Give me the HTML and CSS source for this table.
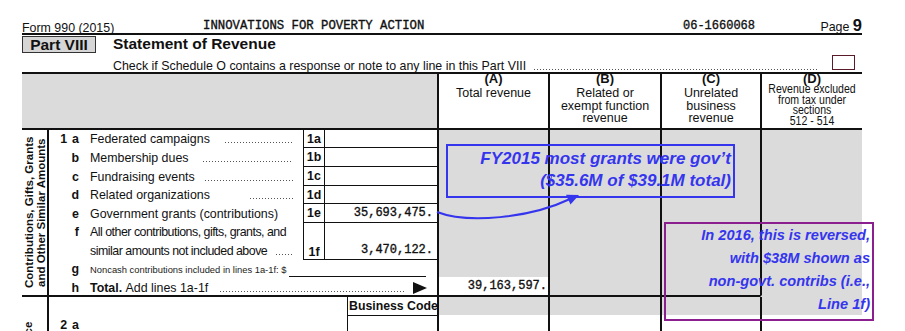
FILE: index.html
```
<!DOCTYPE html>
<html>
<head>
<meta charset="utf-8">
<link rel="stylesheet" href="styles.css">
</head>
<body>
<div class="sheet">
  <div class="form">
    <div class="top">
      <span class="form-no">Form 990 (2015)</span>
      <span class="org">INNOVATIONS FOR POVERTY ACTION</span>
      <span class="ein">06-1660068</span>
      <span class="page-no">Page <b>9</b></span>
    </div>
    <div class="part-row">
      <div class="part-tag">Part VIII</div>
      <div class="part-title">Statement of Revenue</div>
    </div>
    <div class="check-row">
      <span class="check-text">Check if Schedule O contains a response or note to any line in this Part VIII</span>
      <span class="dots lead-check"></span>
      <span class="checkbox"></span>
    </div>

    <div class="band band-head">
      <div class="head-blank"></div>
      <div class="col col-head">
        <div class="col-letter">(A)</div>
        <div class="col-text">Total revenue</div>
      </div>
      <div class="col col-head">
        <div class="col-letter">(B)</div>
        <div class="col-text">Related or<br>exempt function<br>revenue</div>
      </div>
      <div class="col col-head">
        <div class="col-letter">(C)</div>
        <div class="col-text">Unrelated<br>business<br>revenue</div>
      </div>
      <div class="col col-head">
        <div class="col-letter">(D)</div>
        <div class="col-text narrow">
          <span>Revenue excluded</span>
          <span>from tax under</span>
          <span>sections</span>
          <span>512 - 514</span>
        </div>
      </div>
    </div>

    <div class="band band-contrib">
      <div class="desc">
        <div class="side">
          <div class="side-text">Contributions, Gifts, Grants<br>and Other Similar Amounts</div>
        </div>
        <div class="rows">
          <div class="row r18">
            <span class="lbl"><span class="num">1</span>a</span>
            <span class="txt">Federated campaigns<span class="dots gap15"></span></span>
            <span class="box">1a</span>
            <span class="val"></span>
          </div>
          <div class="row r19">
            <span class="lbl">b</span>
            <span class="txt">Membership dues<span class="dots gap15"></span></span>
            <span class="box">1b</span>
            <span class="val"></span>
          </div>
          <div class="row r19">
            <span class="lbl">c</span>
            <span class="txt">Fundraising events<span class="dots gap10"></span></span>
            <span class="box">1c</span>
            <span class="val"></span>
          </div>
          <div class="row r18">
            <span class="lbl">d</span>
            <span class="txt">Related organizations<span class="dots gap40"></span></span>
            <span class="box">1d</span>
            <span class="val"></span>
          </div>
          <div class="row r19">
            <span class="lbl">e</span>
            <span class="txt">Government grants (contributions)</span>
            <span class="box">1e</span>
            <span class="val">35,693,475.</span>
          </div>
          <div class="row r37">
            <span class="lbl lbl-top">f</span>
            <span class="txt-multi">
              <span class="line">All other contributions, gifts, grants, and</span>
              <span class="line">similar amounts not included above<span class="dots gap9"></span></span>
            </span>
            <span class="box box-low">1f</span>
            <span class="val val-low">3,470,122.</span>
          </div>
          <div class="row r18 row-g">
            <span class="lbl">g</span>
            <span class="wide">
              <span class="small">Noncash contributions included in lines 1a-1f: $</span>
              <span class="blank"></span>
            </span>
          </div>
          <div class="row r17 row-h">
            <span class="lbl">h</span>
            <span class="wide total-line">
              <b>Total.</b>&nbsp;Add lines 1a-1f<span class="dots gap12"></span><span class="tri"></span>
            </span>
          </div>
        </div>
      </div>
      <div class="col col-a">
        <div class="fill"></div>
        <div class="total">39,163,597.</div>
      </div>
      <div class="col grey ruled"></div>
      <div class="col grey ruled"></div>
      <div class="col grey unruled"></div>
    </div>

    <div class="band band-prog">
      <div class="desc">
        <div class="side side-clip">
          <div class="side-text2">Program Service<br>Revenue</div>
        </div>
        <div class="prog-rows">
          <span class="lbl lbl2"><span class="num">2</span>a</span>
          <span></span>
          <div class="bc"><div class="bc-head">Business Code</div></div>
        </div>
      </div>
      <div class="col"><div class="cap"></div></div>
      <div class="col"><div class="cap"></div></div>
      <div class="col"><div class="cap"></div></div>
      <div class="col"><div class="cap"></div></div>
    </div>
  </div>

  <svg class="arrow" width="905" height="331" viewBox="0 0 905 331">
    <path d="M437 212 C 468 224, 530 218, 570 199" fill="none" stroke="#3535ee" stroke-width="2"/>
    <polygon points="579,195 570.5,204.5 566,194.8" fill="#3535ee"/>
  </svg>
  <div class="note note-blue">FY2015 most grants were gov’t<br>($35.6M of $39.1M total)</div>
  <div class="note note-purple">In 2016, this is reversed,<br>with $38M shown as<br>non-govt. contribs (i.e.,<br>Line 1f)</div>
</div>
</body>
</html>
```
FILE: styles.css
```
html, body {
  margin: 0;
  padding: 0;
  background: #fff;
}
body {
  font-family: "Liberation Sans", Arial, sans-serif;
  color: #111;
  width: 905px;
  height: 331px;
  overflow: hidden;
}
.sheet {
  position: relative;
  width: 905px;
  height: 331px;
  overflow: hidden;
}
.form {
  margin-left: 22px;
  width: 840px;
}

/* top line */
.top {
  display: flex;
  align-items: flex-end;
  height: 35px;
  box-sizing: border-box;
  border-bottom: 2px solid #111;
}
.form-no {
  width: 181px;
  font-size: 12.4px;
  line-height: 10px;
}
.org, .ein, .val, .total {
  font-family: "Liberation Mono", "Courier New", monospace;
  -webkit-text-stroke: 0.35px #111;
}
.org, .ein {
  line-height: 14px;
}
.org {
  width: 480px;
  font-size: 12.3px;
}
.ein {
  font-size: 12px;
}
.page-no {
  margin-left: auto;
  font-size: 12.4px;
  line-height: 12px;
}
.page-no b {
  font-size: 16.5px;
}

/* part row */
.part-row {
  display: flex;
  align-items: center;
  height: 18px;
}
.part-tag {
  width: 74px;
  height: 17px;
  box-sizing: border-box;
  background: #d6d6d6;
  border: 1px solid #333;
  font-weight: bold;
  font-size: 15.5px;
  line-height: 15px;
  text-align: center;
}
.part-title {
  margin-left: 17px;
  font-weight: bold;
  font-size: 15.5px;
}

/* check row */
.check-row {
  display: flex;
  align-items: flex-end;
  height: 19px;
  padding-left: 91px;
}
.check-text {
  font-size: 12.4px;
  line-height: 12px;
  white-space: nowrap;
}
.dots {
  flex: 1;
  height: 1px;
  background-image: linear-gradient(to right, #555 1px, transparent 1px);
  background-size: 3px 1px;
  background-repeat: repeat-x;
}
.lead-check {
  margin: 0 15px 2px 8px;
}
.checkbox {
  align-self: flex-start;
  width: 23px;
  height: 15px;
  box-sizing: border-box;
  border: 1px solid #5a1a2a;
  margin-top: 2px;
  margin-right: 7px;
}

/* bands */
.band {
  display: grid;
  grid-template-columns: 415px 111px 112px 100px 102px;
}
.col {
  border-left: 2px solid #111;
}
.grey, .head-blank {
  background: #dbdbdb;
}
.band-head {
  height: 58px;
  box-sizing: border-box;
  border-top: 2px solid #111;
  border-bottom: 2px solid #111;
}
.col-head {
  text-align: center;
  background: #fff;
}
.col-letter {
  font-weight: bold;
  font-size: 13px;
  line-height: 13px;
  margin-top: -2px;
}
.col-text {
  font-size: 12.5px;
  line-height: 12.5px;
  margin-top: 2px;
}
.col-text.narrow {
  font-size: 12px;
  line-height: 10.7px;
  margin-top: -1px;
}
.col-text.narrow span {
  display: block;
  transform: scale(0.88, 1.04);
  white-space: nowrap;
}

/* contributions band */
.band-contrib {
  height: 167px;
}
.desc {
  display: flex;
  border-bottom: 2px solid #111;
}
.side {
  width: 25px;
  border-right: 2px solid #111;
  display: flex;
  justify-content: center;
}
.side-text {
  writing-mode: vertical-rl;
  transform: rotate(180deg);
  height: 165px;
  font-weight: bold;
  font-size: 11.5px;
  line-height: 12px;
  text-align: center;
  white-space: nowrap;
}
.rows {
  width: 388px;
}
.row {
  display: grid;
  grid-template-columns: 41px 213px 22px 112px;
  box-sizing: border-box;
  font-size: 12.4px;
}
.r17 { height: 17px; }
.r18 { height: 18px; }
.r19 { height: 19px; }
.r37 { height: 37px; }
.lbl {
  align-self: center;
  text-align: right;
  padding-right: 11px;
  font-weight: bold;
  font-size: 12.4px;
  line-height: 14px;
}
.lbl-top {
  align-self: start;
  line-height: 18.5px;
}
.num {
  margin-right: 5px;
}
.txt {
  align-self: center;
  display: flex;
  align-items: baseline;
  padding-right: 10px;
  line-height: 14px;
  white-space: nowrap;
}
.gap9 { margin-left: 9px; }
.gap10 { margin-left: 10px; }
.gap12 { margin-left: 12px; }
.gap15 { margin-left: 15px; }
.gap40 { margin-left: 40px; }
.txt-multi {
  display: flex;
  flex-direction: column;
  padding-right: 10px;
  line-height: 18.5px;
  letter-spacing: -0.5px;
  white-space: nowrap;
}
.txt-multi .line {
  display: flex;
  align-items: baseline;
}
.box {
  border-left: 1px solid #111;
  border-right: 1px solid #111;
  border-bottom: 1px solid #111;
  display: flex;
  align-items: center;
  justify-content: center;
  font-weight: bold;
  line-height: 14px;
}
.box-low {
  align-items: flex-end;
}
.val {
  border-bottom: 1px solid #111;
  display: flex;
  align-items: center;
  justify-content: flex-end;
  padding-right: 4px;
  font-size: 12px;
  line-height: 14px;
}
.val-low {
  align-items: flex-end;
  padding-bottom: 2px;
}
.wide {
  grid-column: 2 / 5;
  display: flex;
  padding-right: 11px;
  white-space: nowrap;
}
.row-g .wide {
  align-items: flex-end;
}
.small {
  font-size: 9.4px;
  line-height: 12px;
  margin-bottom: 2px;
  color: #222;
}
.blank {
  flex: 1;
  height: 1px;
  background: #111;
  margin: 0 0 1px 3px;
}
.row-h {
  padding-top: 2px;
}
.total-line {
  align-self: center;
  align-items: baseline;
  line-height: 14px;
  padding-right: 10px;
}
.tri {
  width: 0;
  height: 0;
  border-left: 14px solid #111;
  border-top: 6px solid transparent;
  border-bottom: 6px solid transparent;
  margin-left: 9px;
  align-self: center;
}
.col-a {
  display: flex;
  flex-direction: column;
  border-bottom: 2px solid #111;
}
.fill {
  flex: 1;
  background: #dbdbdb;
}
.total {
  height: 18px;
  line-height: 18px;
  text-align: right;
  padding-right: 1px;
  font-size: 12px;
}
.ruled {
  border-bottom: 2px solid #111;
}
.unruled {
  border-bottom: 2px solid #dbdbdb;
}

/* program service band */
.band-prog {
  height: 60px;
}
.band-prog .desc {
  border-bottom: none;
}
.side-clip {
  overflow: hidden;
  justify-content: flex-start;
}
.side-text2 {
  writing-mode: vertical-rl;
  transform: rotate(180deg);
  height: 140px;
  text-align: center;
  font-weight: bold;
  font-size: 11.5px;
  line-height: 12px;
  white-space: nowrap;
}
.prog-rows {
  width: 388px;
  display: grid;
  grid-template-columns: 41px 1fr 90px;
}
.lbl2 {
  align-self: start;
  padding-top: 23px;
  line-height: 10px;
}
.bc {
  border-left: 1px solid #111;
}
.bc-head {
  height: 18px;
  border-bottom: 1px solid #111;
  font-weight: bold;
  font-size: 12.3px;
  line-height: 18px;
  padding-left: 1px;
  white-space: nowrap;
}
.cap {
  height: 18px;
  background: #dbdbdb;
}

/* overlays */
.arrow {
  position: absolute;
  left: 0;
  top: 0;
  pointer-events: none;
}
.note {
  position: absolute;
  box-sizing: border-box;
  color: #3535ee;
  font-style: italic;
  font-weight: bold;
  text-align: right;
  white-space: nowrap;
}
.note-blue {
  left: 446px;
  top: 144px;
  width: 289px;
  height: 54px;
  border: 2px solid #3535ee;
  font-size: 17px;
  line-height: 22px;
  padding: 2px 2px 0 0;
}
.note-purple {
  left: 664px;
  top: 222px;
  width: 210px;
  height: 99px;
  border: 2px solid #8b1f8f;
  font-size: 14.6px;
  line-height: 23px;
  padding: 0 2px 0 0;
}
```
